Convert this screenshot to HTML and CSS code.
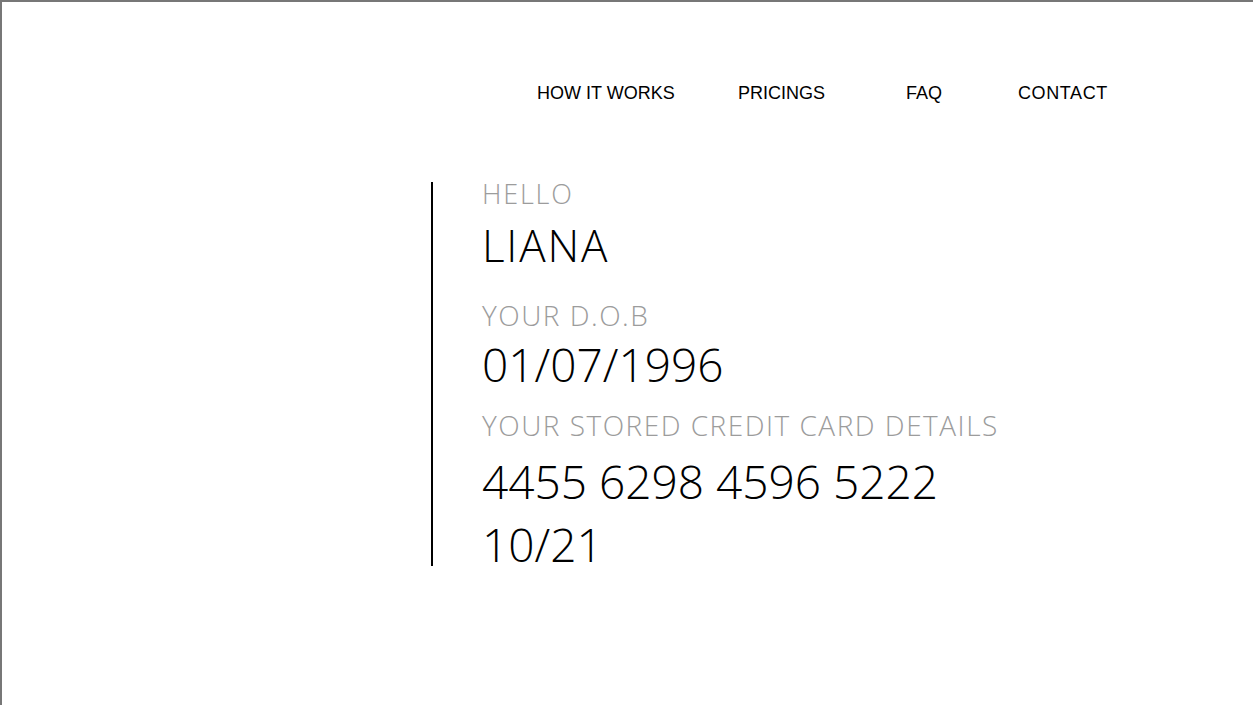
FILE: index.html
```html
<!DOCTYPE html>
<html lang="en">
<head>
<meta charset="utf-8">
<title>Profile</title>
<link rel="stylesheet" href="styles.css">
</head>
<body>
<div class="frame">
  <header class="nav">
    <a class="nav-link" href="#">HOW IT WORKS</a>
    <a class="nav-link" href="#">PRICINGS</a>
    <a class="nav-link" href="#">FAQ</a>
    <a class="nav-link" href="#">CONTACT</a>
  </header>
  <main class="details">
    <p class="label hello">HELLO</p>
    <p class="value name">LIANA</p>
    <p class="label dob-label">YOUR D.O.B</p>
    <p class="value dob">01/07/1996</p>
    <p class="label card-label">YOUR STORED CREDIT CARD DETAILS</p>
    <p class="value card-number">4455 6298 4596 5222</p>
    <p class="value card-expiry">10/21</p>
  </main>
</div>
</body>
</html>
```
FILE: styles.css
```css
* { box-sizing: border-box; }
html, body { margin: 0; padding: 0; background: #fff; }
.frame {
  min-height: 100vh;
  border-top: 2px solid #777;
  border-left: 2px solid #777;
  overflow: hidden;
}
.nav {
  display: grid;
  grid-template-columns: 201px 168px 112px auto;
  margin: 81px 0 0 535px;
  font-family: "Liberation Sans", Arial, sans-serif;
  font-size: 18px;
  line-height: 20px;
}
.nav-link { color: #000; text-decoration: none; }
.nav-link:last-child { letter-spacing: 0.6px; }
.details {
  margin: 79px 0 0 429px;
  border-left: 2px solid #000;
  padding-left: 49px;
  font-family: "Open Sans", sans-serif;
  font-weight: 300;
}
.details p { margin: 0; }
.label { color: #9c9c9c; font-size: 28px; line-height: 32px; letter-spacing: 1.5px; }
.value { color: #000; font-size: 46px; line-height: 52px; }
.hello { font-size: 27px; line-height: 24px; letter-spacing: 1.8px; }
.name { font-size: 44px; line-height: 50px; letter-spacing: 1.8px; margin-top: 14px !important; }
.dob-label { margin-top: 29px !important; }
.dob { margin-top: 7px !important; }
.card-label { margin-top: 19px !important; }
.card-number { margin-top: 14px !important; }
.card-expiry { margin-top: 15px !important; line-height: 44px; }
```
